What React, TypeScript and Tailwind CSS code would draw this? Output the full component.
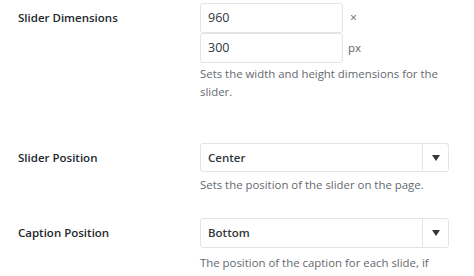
import React from 'react';

const Label: React.FC<{ text: string; className?: string }> = ({ text, className }) => (
  <div className={`w-[200px] shrink-0 pl-[18px] text-[11.5px] font-semibold text-[#23282d] ${className || ''}`}>{text}</div>
);

const Select: React.FC<{ value: string; tall?: boolean }> = ({ value, tall }) => (
  <div className={`flex ${tall ? 'h-[30px]' : 'h-[29px]'} w-[249px] items-stretch rounded-[3px] border border-[#e2e4e7] bg-white`}>
    <div className="flex flex-1 items-center pl-[7px] text-[11.5px] font-semibold text-[#32373c]">{value}</div>
    <div className="flex w-[26px] items-center justify-center border-l border-[#e2e4e7]">
      <svg width="8" height="6" viewBox="0 0 8 6">
        <path d="M0 0 H8 L4 6 Z" fill="#32373c" />
      </svg>
    </div>
  </div>
);

const App: React.FC = () => {
  return (
    <div className="h-[276px] w-[474px] overflow-hidden bg-white" style={{ fontFamily: '"Open Sans", "Noto Sans", sans-serif' }}>
      <div className="flex pt-[3px]">
        <Label text="Slider Dimensions" className="pt-[6px]" />
        <div>
          <div className="flex items-center">
            <div className="flex h-[30px] w-[143px] items-center rounded-[3px] border border-[#e2e4e7] pl-[7px] text-[12.5px] text-[#32373c]">960</div>
            <span className="ml-[7px] text-[12px] text-[#666]">×</span>
          </div>
          <div className="flex items-center">
            <div className="flex h-[30px] w-[143px] items-center rounded-[3px] border border-[#e2e4e7] pl-[7px] text-[12.5px] text-[#32373c]">300</div>
            <span className="ml-[5px] text-[11.5px] text-[#666]">px</span>
          </div>
          <p className="mt-[2px] w-[250px] text-[11.4px] leading-[18px] text-[#646970]">Sets the width and height dimensions for the slider.</p>
        </div>
      </div>

      <div className="mt-[42px] flex">
        <Label text="Slider Position" className="pt-[6px]" />
        <div>
          <Select value="Center" />
          <p className="mt-[4px] w-[250px] text-[11.4px] leading-[18px] text-[#646970]">Sets the position of the slider on the page.</p>
        </div>
      </div>

      <div className="mt-[24px] flex">
        <Label text="Caption Position" className="pt-[6px]" />
        <div>
          <Select value="Bottom" tall />
          <p className="mt-[6px] w-[250px] text-[11.4px] leading-[18px] text-[#646970]">The position of the caption for each slide, if specified.</p>
        </div>
      </div>
    </div>
  );
};

export default App;
